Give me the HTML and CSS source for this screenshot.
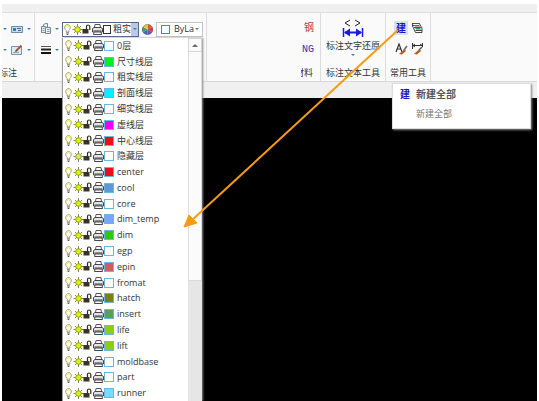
FILE: index.html
```html
<!DOCTYPE html>
<html lang="zh-CN">
<head>
  <meta charset="UTF-8">
  <meta name="viewport" content="width=device-width, initial-scale=1">
  <title>图层</title>
  <link rel="stylesheet" href="styles.css">
</head>
<body>
  <svg class="defs" aria-hidden="true">
    <symbol id="layer-state" viewBox="0 0 40 13">
      <path d="M3.200 7.500C1.500 6 1.300 4 2.300 2.600C3.300 1.200 5.700 1.200 6.700 2.600C7.700 4 7.500 6 5.800 7.500V9H3.200Z" fill="#fffef0" stroke="#9c9b50" stroke-width=".9"/>
      <path d="M2.800 4Q4.500 1 6.200 4" fill="none" stroke="#e8e33c" stroke-width=".8"/>
      <path d="M3.200 10h2.600M3.700 11.500h1.600" stroke="#555"/>
      <path d="M14.500 1v11M9.500 6.500h10.500M11 3l7 7M18 3l-7 7" stroke="#6b6b28" stroke-width=".8"/>
      <circle cx="14.500" cy="6.500" r="2.800" fill="#dcf20c" stroke="#8d9518" stroke-width=".9"/>
      <path d="M19.500 6h6v4.500h-6z" fill="#3b3322"/>
      <path d="M23.500 6V3.500Q23.500 2 25 2T26.800 3.500V7" fill="none" stroke="#2e281d" stroke-width="1.200"/>
      <path d="M31.500 4.500L32 1.500h5l.5 3" fill="#fff" stroke="#444" stroke-width=".9"/>
      <path d="M29.500 5.500l1.500-1h7l1.500 1v3.500h-10z" fill="#e4e4e4" stroke="#333" stroke-width=".9"/>
      <path d="M31 9l-.5 2.500h8L38 9z" fill="#fff" stroke="#333" stroke-width=".9"/>
      <path d="M30.500 7.500h8" stroke="#777" stroke-width=".8"/>
    </symbol>
  </svg>

  <div class="app">
    <div class="titlebar"></div>
    <div class="ribbon">
      <section class="panel panel-dim">
        <div class="tools">
          <div class="row">
            <i class="tick"></i>
            <button class="tool" aria-label="公差">
              <svg width="12" height="9" viewBox="0 0 12 9"><path d="M.5 1.500h11v6H.5z" fill="#c9dff0" stroke="#6d8ba6"/><path d="M2 3h3v3H2z" fill="#3d77ad"/><path d="M6 3.500h4M7 5.500h3" stroke="#47688a"/></svg>
            </button>
            <i class="tick"></i>
          </div>
          <div class="row">
            <i class="tick"></i>
            <button class="tool" aria-label="编辑标注">
              <svg width="12" height="12" viewBox="0 0 12 12"><path d="M.5 2.500h10v8H.5z" fill="#dceaf5" stroke="#7b93a8"/><path d="M2 8.500h6" stroke="#8ba3b5"/><path d="M5 7l5.500-5.500" stroke="#a45c3d" stroke-width="2"/><path d="M4 8l1-2 1 1z" fill="#333"/></svg>
            </button>
            <i class="tick"></i>
          </div>
        </div>
        <h2 class="cut-label"><span>标注</span></h2>
      </section>

      <section class="panel panel-layer">
        <div class="row">
          <button class="tool" aria-label="图层特性">
            <svg width="12" height="12" viewBox="0 0 12 12"><path d="M3.500 4V1.500l2-1h2V4M1.500 3.500h4v6h-4z" fill="#e7eef3" stroke="#77858f"/><path d="M5.500 4.500h5v6h-5z" fill="#eef3f6" stroke="#77858f"/><path d="M7 6.500h2.500M7 8.500h2.500M2.500 5.500h2M2.500 7.500h2" stroke="#8699a8"/></svg>
          </button>
          <i class="tick"></i>
          <button class="layer-combo" aria-haspopup="listbox">
            <svg class="state" aria-hidden="true"><use href="#layer-state"/></svg>
            <span class="swatch dark"></span>
            <span class="combo-text">粗实</span>
            <span class="combo-arrow"><i class="tick"></i></span>
          </button>
          <button class="tool wheel" aria-label="颜色">
            <svg width="11" height="11" viewBox="0 0 12 12"><path d="M6 6V0A6 6 0 0 1 11.200 3z" fill="#e4572e"/><path d="M6 6l5.200-3A6 6 0 0 1 11.200 9z" fill="#d63b4d"/><path d="M6 6l5.200 3A6 6 0 0 1 6 12z" fill="#7352a8"/><path d="M6 6v6A6 6 0 0 1 .8 9z" fill="#356cc0"/><path d="M6 6L.8 9A6 6 0 0 1 .8 3z" fill="#3fa06b"/><path d="M6 6L.8 3A6 6 0 0 1 6 0z" fill="#e2c93c"/><circle cx="6" cy="6" r="5.500" fill="none" stroke="#777" stroke-width=".5"/></svg>
          </button>
          <div class="color-box">
            <span class="swatch"></span>
            <select aria-label="对象颜色"><option>ByLa</option></select>
            <i class="tick gray"></i>
          </div>
        </div>
        <div class="row">
          <button class="tool" aria-label="线宽">
            <svg width="12" height="10" viewBox="0 0 12 10"><path d="M1 1.500h10" stroke="#555"/><path d="M1 4.500h10" stroke="#222" stroke-width="2"/><path d="M1 8h10" stroke="#111" stroke-width="2"/></svg>
          </button>
          <i class="tick"></i>
        </div>
      </section>

      <section class="panel panel-material">
        <div class="tools">
          <button class="text-tool red">钢</button>
          <button class="text-tool navy">NG</button>
        </div>
        <h2 class="cut-label"><span>材料</span></h2>
      </section>

      <section class="panel panel-text">
        <button class="big-tool">
          <svg width="22" height="19" viewBox="0 0 22 19"><path d="M8 1L3 4l5 3M13 1l5 3-5 3" fill="none" stroke="#222"/><path d="M1.500 9v9M20.500 9v9" stroke="#1a1ae0" stroke-width="1.500"/><path d="M3 13.500h16" stroke="#1a1ae0" stroke-width="2"/><path d="M2 13.500l6-4v8zM20 13.500l-6-4v8z" fill="#1a1ae0"/></svg>
          <span>标注文字还原</span>
          <i class="tick"></i>
        </button>
        <h2>标注文本工具</h2>
      </section>

      <section class="panel panel-common">
        <div class="grid">
          <button class="tool new-tool active">建</button>
          <button class="tool" aria-label="图层">
            <svg width="12" height="12" viewBox="0 0 12 12"><path d="M1 1.500h7M1 3.500h7M3 5.500h7" stroke="#555"/><path d="M3 3h5l1 1.500H4z" fill="#d33"/><path d="M4 6h5l1 1.500H5z" fill="#3a9b55"/><path d="M1.500 1v3l3 6.500H11V6L8 1M4.500 8.500H11" fill="none" stroke="#333" stroke-width=".9"/></svg>
          </button>
          <button class="tool" aria-label="文字刷">
            <svg width="13" height="12" viewBox="0 0 13 12"><path d="M1 9L4 1l3 8M2 6h4" fill="none" stroke="#333" stroke-width="1.200"/><path d="M12 3L9 7" stroke="#666" stroke-width="1.500"/><path d="M9.500 6l1.500 2-4 3.500-3-.5z" fill="#b0602d"/></svg>
          </button>
          <button class="tool" aria-label="标注刷">
            <svg width="13" height="12" viewBox="0 0 13 12"><path d="M1.500 0v6M11.500 0v4M2 2.500h9M4 1L2 2.500 4 4M9 1l2 1.500" fill="none" stroke="#333"/><path d="M11 4L8 7" stroke="#555" stroke-width="1.500"/><path d="M8.500 6l1.500 2-4 3.500-3-.5z" fill="#b0602d"/></svg>
          </button>
        </div>
        <h2>常用工具</h2>
      </section>
    </div>
    <div class="tabbar"></div>
    <main class="canvas"></main>

    <div class="layer-menu">
      <ul id="layers" role="listbox" aria-label="图层"></ul>
      <div class="scrollbar">
        <span class="scroll-up"></span>
        <span class="scroll-thumb"></span>
      </div>
    </div>

    <div class="tooltip" role="tooltip">
      <span class="new-icon">建</span>
      <strong>新建全部</strong>
      <p>新建全部</p>
    </div>

    <svg class="arrow" width="216" height="200" viewBox="0 0 216 200" aria-hidden="true">
      <path d="M215 1L8 192" stroke="#f79a14" stroke-width="2"/>
      <path d="M1 198L6 186l8 8z" fill="#f79a14" stroke="#f79a14"/>
    </svg>
  </div>

  <script src="script.js"></script>
</body>
</html>
```
FILE: styles.css
```css
* {
  box-sizing: border-box;
}
body {
  margin: 0;
  background-color: #fff;
  color: #333;
  font-family: "Open Sans", "Noto Sans CJK SC", sans-serif;
  font-size: 9px;
  line-height: 12px;
}
button, select {
  font: inherit;
  color: inherit;
  border: none;
  background: none;
  padding: 0;
  margin: 0;
}
svg {
  display: block;
  flex: none;
}
h2 {
  margin: 0;
  font-size: 9px;
  font-weight: normal;
  line-height: 12px;
  text-align: center;
  white-space: nowrap;
}
.defs {
  position: absolute;
  width: 0;
  height: 0;
}
.app {
  position: relative;
  display: flex;
  flex-direction: column;
  height: 100vh;
  padding: 4px 2px 0;
  overflow: hidden;
}
.titlebar {
  height: 9px;
  background-color: #f0f0f0;
  border-bottom: 1px solid #dedede;
}
.ribbon {
  display: flex;
  background-color: #fafafa;
}
.tabbar {
  height: 17px;
  background-color: #f0f0f0;
  border-top: 1px solid #d8d8d8;
}
.canvas {
  flex: 1;
  background-color: #000;
}

/* ribbon panels */
.panel {
  display: flex;
  flex-direction: column;
  justify-content: space-between;
  height: 68px;
  padding: 8px 0 2px;
  border-right: 1px solid #dcdcdc;
}
.panel-dim {
  width: 33px;
}
.panel-layer {
  width: 172px;
  padding-left: 5px;
  justify-content: flex-start;
}
.panel-material {
  width: 20px;
  margin-left: 94px;
}
.panel-text {
  width: 65px;
  padding-top: 6px;
}
.panel-common {
  width: 45px;
}
.row {
  display: flex;
  align-items: center;
  height: 16px;
  gap: 3px;
  margin-bottom: 5px;
}
.panel-dim .row {
  gap: 4px;
  padding-left: 1px;
}
.cut-label {
  display: flex;
  overflow: hidden;
}
.panel-dim .cut-label span {
  margin-left: -3px;
}
.panel-material .cut-label span {
  margin-left: -6px;
}
.tool {
  display: flex;
  align-items: center;
  justify-content: center;
}
.tick {
  flex: none;
  border: 2px solid transparent;
  border-top-color: #3f7fb5;
  border-bottom: 0;
}
.tick.gray {
  border-top-color: #777;
}

.layer-combo {
  display: flex;
  align-items: center;
  width: 77px;
  height: 15px;
  background-color: #fff;
  border: 1px solid #54688c;
}
.state {
  width: 40px;
  height: 13px;
}
.swatch {
  flex: none;
  width: 10px;
  height: 10px;
  background-color: #fff;
  border: 1px solid #69b7e0;
}
.swatch.dark {
  width: 8px;
  height: 9px;
  border-color: #333;
}
.combo-text {
  flex: 1;
  margin-left: 2px;
  white-space: nowrap;
  text-align: left;
}
.combo-arrow {
  display: flex;
  align-items: center;
  justify-content: center;
  align-self: stretch;
  width: 7px;
  background-color: #b9cbe4;
}
.color-box {
  display: flex;
  align-items: center;
  width: 47px;
  height: 15px;
  padding: 0 3px 0 4px;
  background-color: #fff;
  border: 1px solid #c4c4c4;
}
.color-box .swatch {
  width: 9px;
  height: 9px;
  border-color: #3c8dc4;
}
.color-box select {
  appearance: none;
  flex: 1;
  min-width: 0;
  margin: 0 1px 0 4px;
  text-overflow: clip;
}
.panel-material .tools {
  display: flex;
  flex-direction: column;
  align-items: flex-end;
  padding-right: 6px;
}
.text-tool {
  height: 16px;
  margin-bottom: 5px;
  font-family: "Liberation Mono", "Noto Sans CJK SC", monospace;
  font-size: 10px;
}
.red {
  color: #c8343c;
}
.navy {
  color: #3030b0;
}
.big-tool {
  display: flex;
  flex-direction: column;
  align-items: center;
  white-space: nowrap;
}
.big-tool span {
  margin: 2px 0;
}
.grid {
  display: grid;
  grid-template-columns: 14px 14px;
  grid-auto-rows: 14px;
  gap: 7px 2px;
  padding-left: 8px;
}
.new-tool, .new-icon {
  color: #1515c8;
  font-family: "Noto Sans CJK SC", sans-serif;
  font-size: 10px;
  font-weight: bold;
}
.active {
  background-color: #d5e3f5;
}

/* open layer list */
.layer-menu {
  position: absolute;
  top: 38px;
  bottom: 0;
  left: 62px;
  display: flex;
  width: 140px;
  background-color: #fff;
  border-left: 1px solid #999;
  box-shadow: 1px 0 2px #888;
}
.layer-menu ul {
  flex: 1;
  display: flex;
  flex-direction: column;
  margin: 0;
  padding: 0 0 0 1px;
  list-style: none;
}
.layer-menu li {
  flex: 1;
  display: flex;
  align-items: center;
}
.layer-menu li span:last-child {
  margin-left: 3px;
}
.off .state {
  filter: grayscale(0.4);
}
.scrollbar {
  display: flex;
  flex-direction: column;
  width: 14px;
  background-color: #e6e6e6;
}
.scroll-up {
  display: flex;
  align-items: center;
  justify-content: center;
  height: 14px;
  background-color: #fafafa;
  border: 1px solid #d5d5d5;
}
.scroll-up::before {
  content: "";
  border: 3px solid transparent;
  border-top: 0;
  border-bottom-color: #666;
}
.scroll-thumb {
  height: 63%;
  background-color: #fbfbfb;
  border: 1px solid #dcdcdc;
  border-top: 0;
}

.tooltip {
  position: absolute;
  top: 83px;
  left: 392px;
  display: grid;
  grid-template-columns: 16px 1fr;
  align-content: start;
  row-gap: 8px;
  width: 139px;
  height: 46px;
  padding: 4px 7px;
  background-color: #fff;
  border: 1px solid #ddd;
  box-shadow: 1px 1px 2px #888;
}
.tooltip strong {
  color: #555;
  font-size: 10px;
}
.tooltip p {
  grid-column: 2;
  margin: 0;
  color: #777;
}
.arrow {
  position: absolute;
  top: 29px;
  left: 183px;
}
```
FILE: script.js
```js
const layers = [
  ['0层', '#fff'],
  ['尺寸线层', '#00f01c'],
  ['粗实线层', '#fff'],
  ['剖面线层', '#00f0ff'],
  ['细实线层', '#fff'],
  ['虚线层', '#f000f0'],
  ['中心线层', '#ee0c18'],
  ['隐藏层', '#fff', 'off'],
  ['center', '#ee0c18'],
  ['cool', '#5b9bd5'],
  ['core', '#fff'],
  ['dim_temp', '#7da2ff'],
  ['dim', '#2ec814'],
  ['egp', '#fff'],
  ['epin', '#cc6060'],
  ['fromat', '#fff'],
  ['hatch', '#778010'],
  ['insert', '#5c9c5c'],
  ['life', '#90cc10'],
  ['lift', '#90cc10'],
  ['moldbase', '#fff'],
  ['part', '#fff'],
  ['runner', '#78dcff']
];

document.getElementById('layers').innerHTML = layers.map(([name, color, state]) => `
  <li role="option" class="${state || ''}">
    <svg class="state" aria-hidden="true"><use href="#layer-state"/></svg>
    <span class="swatch" style="background-color: ${color}"></span>
    <span>${name}</span>
  </li>`).join('');
```
